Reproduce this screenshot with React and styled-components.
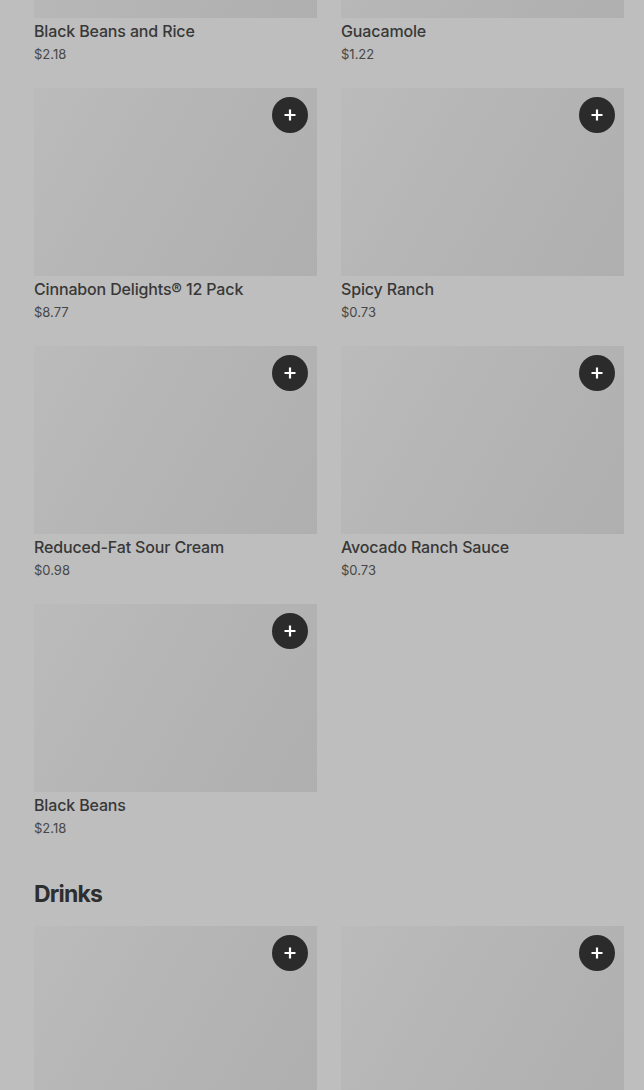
import React from 'react';
import styled, { createGlobalStyle } from 'styled-components';

const GlobalStyle = createGlobalStyle`
  html, body {
    margin: 0;
    padding: 0;
    background: #bebebe;
    font-family: Inter, "Noto Sans", Arial, sans-serif;
    overflow: hidden;
  }
`;

const Page = styled.div`
  padding: 0 20px 0 34px;
  margin-top: -170px;
`;

const Grid = styled.div`
  display: grid;
  grid-template-columns: 283px 283px;
  column-gap: 24px;
  row-gap: 26px;
`;

const Card = styled.div`
  display: flex;
  flex-direction: column;
`;

const Thumb = styled.div`
  position: relative;
  height: 188px;
  background: linear-gradient(120deg, #bbbbbb 0%, #b5b5b5 45%, #afafaf 100%);
`;

const AddButton = styled.button`
  position: absolute;
  top: 9px;
  right: 9px;
  width: 36px;
  height: 36px;
  border-radius: 50%;
  border: none;
  padding: 0;
  background: #2b2b2b;
  display: flex;
  align-items: center;
  justify-content: center;
  cursor: pointer;
`;

const Title = styled.div`
  margin-top: 3px;
  font-size: 16px;
  line-height: 20px;
  font-weight: 500;
  letter-spacing: -0.15px;
  color: #383838;
`;

const Price = styled.div`
  margin-top: 5px;
  font-size: 13px;
  line-height: 16px;
  color: #474747;
`;

const SectionTitle = styled.h2`
  margin: 42px 0 16px;
  font-size: 23px;
  line-height: 32px;
  font-weight: 700;
  letter-spacing: -0.8px;
  color: #2e2e2e;
`;

const PlusIcon = () => (
  <svg width="14" height="14" viewBox="0 0 14 14">
    <path d="M7 1.5v11M1.5 7h11" stroke="#fff" strokeWidth="2.2" />
  </svg>
);

const sides = [
  { name: 'Black Beans and Rice', price: '$2.18' },
  { name: 'Guacamole', price: '$1.22' },
  { name: 'Cinnabon Delights® 12 Pack', price: '$8.77' },
  { name: 'Spicy Ranch', price: '$0.73' },
  { name: 'Reduced-Fat Sour Cream', price: '$0.98' },
  { name: 'Avocado Ranch Sauce', price: '$0.73' },
  { name: 'Black Beans', price: '$2.18' },
];

const drinks = [
  { name: 'Baja Blast', price: '$2.49' },
  { name: 'Pepsi', price: '$2.29' },
];

const Item = ({ name, price, showButton = true }) => (
  <Card>
    <Thumb>
      {showButton && (
        <AddButton aria-label="Add">
          <PlusIcon />
        </AddButton>
      )}
    </Thumb>
    <Title>{name}</Title>
    <Price>{price}</Price>
  </Card>
);

export default function App() {
  return (
    <Page>
      <GlobalStyle />
      <Grid>
        {sides.map((s, i) => (
          <Item key={s.name} {...s} showButton={i > 1} />
        ))}
      </Grid>
      <SectionTitle>Drinks</SectionTitle>
      <Grid>
        {drinks.map((d) => (
          <Item key={d.name} {...d} />
        ))}
      </Grid>
    </Page>
  );
}
